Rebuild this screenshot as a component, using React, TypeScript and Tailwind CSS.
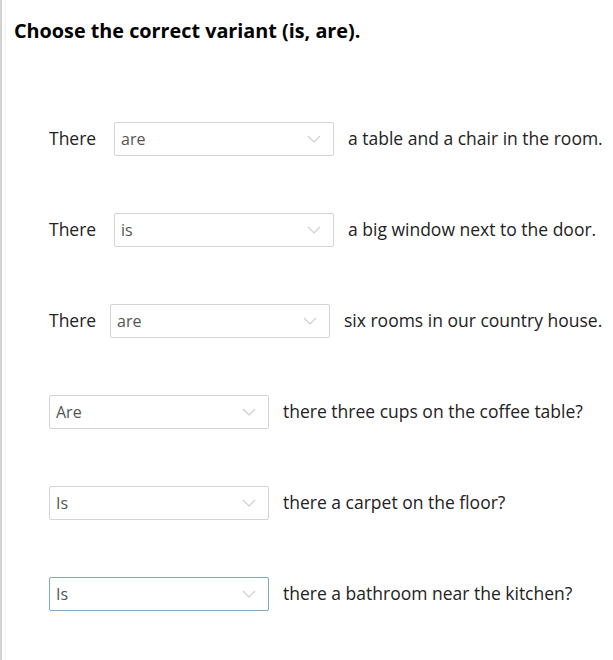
import React from 'react';

interface RowProps {
  lead?: string;
  leadWidth?: string;
  value: string;
  rest: string;
  focused?: boolean;
}

const Chevron = () => (
  <svg width="14" height="8" viewBox="0 0 14 8" fill="none" className="shrink-0">
    <path d="M1 1l6 6 6-6" stroke="#cfcfcf" strokeWidth="1.2" />
  </svg>
);

const Row: React.FC<RowProps> = ({ lead, leadWidth = 'w-[65px]', value, rest, focused }) => (
  <div className="flex h-[91px] items-center pl-[49px]">
    {lead && <span className={`${leadWidth} shrink-0`}>{lead}</span>}
    <div
      className={`flex h-[34px] w-[220px] shrink-0 items-center justify-between rounded-[2px] border bg-white pl-[6px] pr-[12px] text-[16px] text-[#555] ${
        focused ? 'border-[#7fa7c9]' : 'border-[#d4d4d4]'
      }`}
    >
      <span>{value}</span>
      <Chevron />
    </div>
    <span className="ml-[14px] whitespace-nowrap">{rest}</span>
  </div>
);

export default function App() {
  return (
    <div
      className="flex min-h-[660px] w-[613px] bg-white text-[17.5px] text-[#222]"
      style={{ fontFamily: '"Open Sans", sans-serif' }}
    >
      <div className="w-[2px] shrink-0 bg-[#d2d2d2]" />
      <div className="w-[3px] shrink-0" />
      <div className="w-px shrink-0 bg-[#f0f0f0]" />
      <div className="flex-1">
        <h1 className="pl-[8px] pt-[18px] text-[19.8px] font-bold leading-[26px] text-black">
          Choose the correct variant (is, are).
        </h1>
        <div className="-ml-[6px] mt-[49px] flex flex-col">
          <Row lead="There" value="are" rest="a table and a chair in the room." />
          <Row lead="There" value="is" rest="a big window next to the door." />
          <Row lead="There" leadWidth="w-[61px]" value="are" rest="six rooms in our country house." />
          <Row value="Are" rest="there three cups on the coffee table?" />
          <Row value="Is" rest="there a carpet on the floor?" />
          <Row value="Is" rest="there a bathroom near the kitchen?" focused />
        </div>
      </div>
    </div>
  );
}
